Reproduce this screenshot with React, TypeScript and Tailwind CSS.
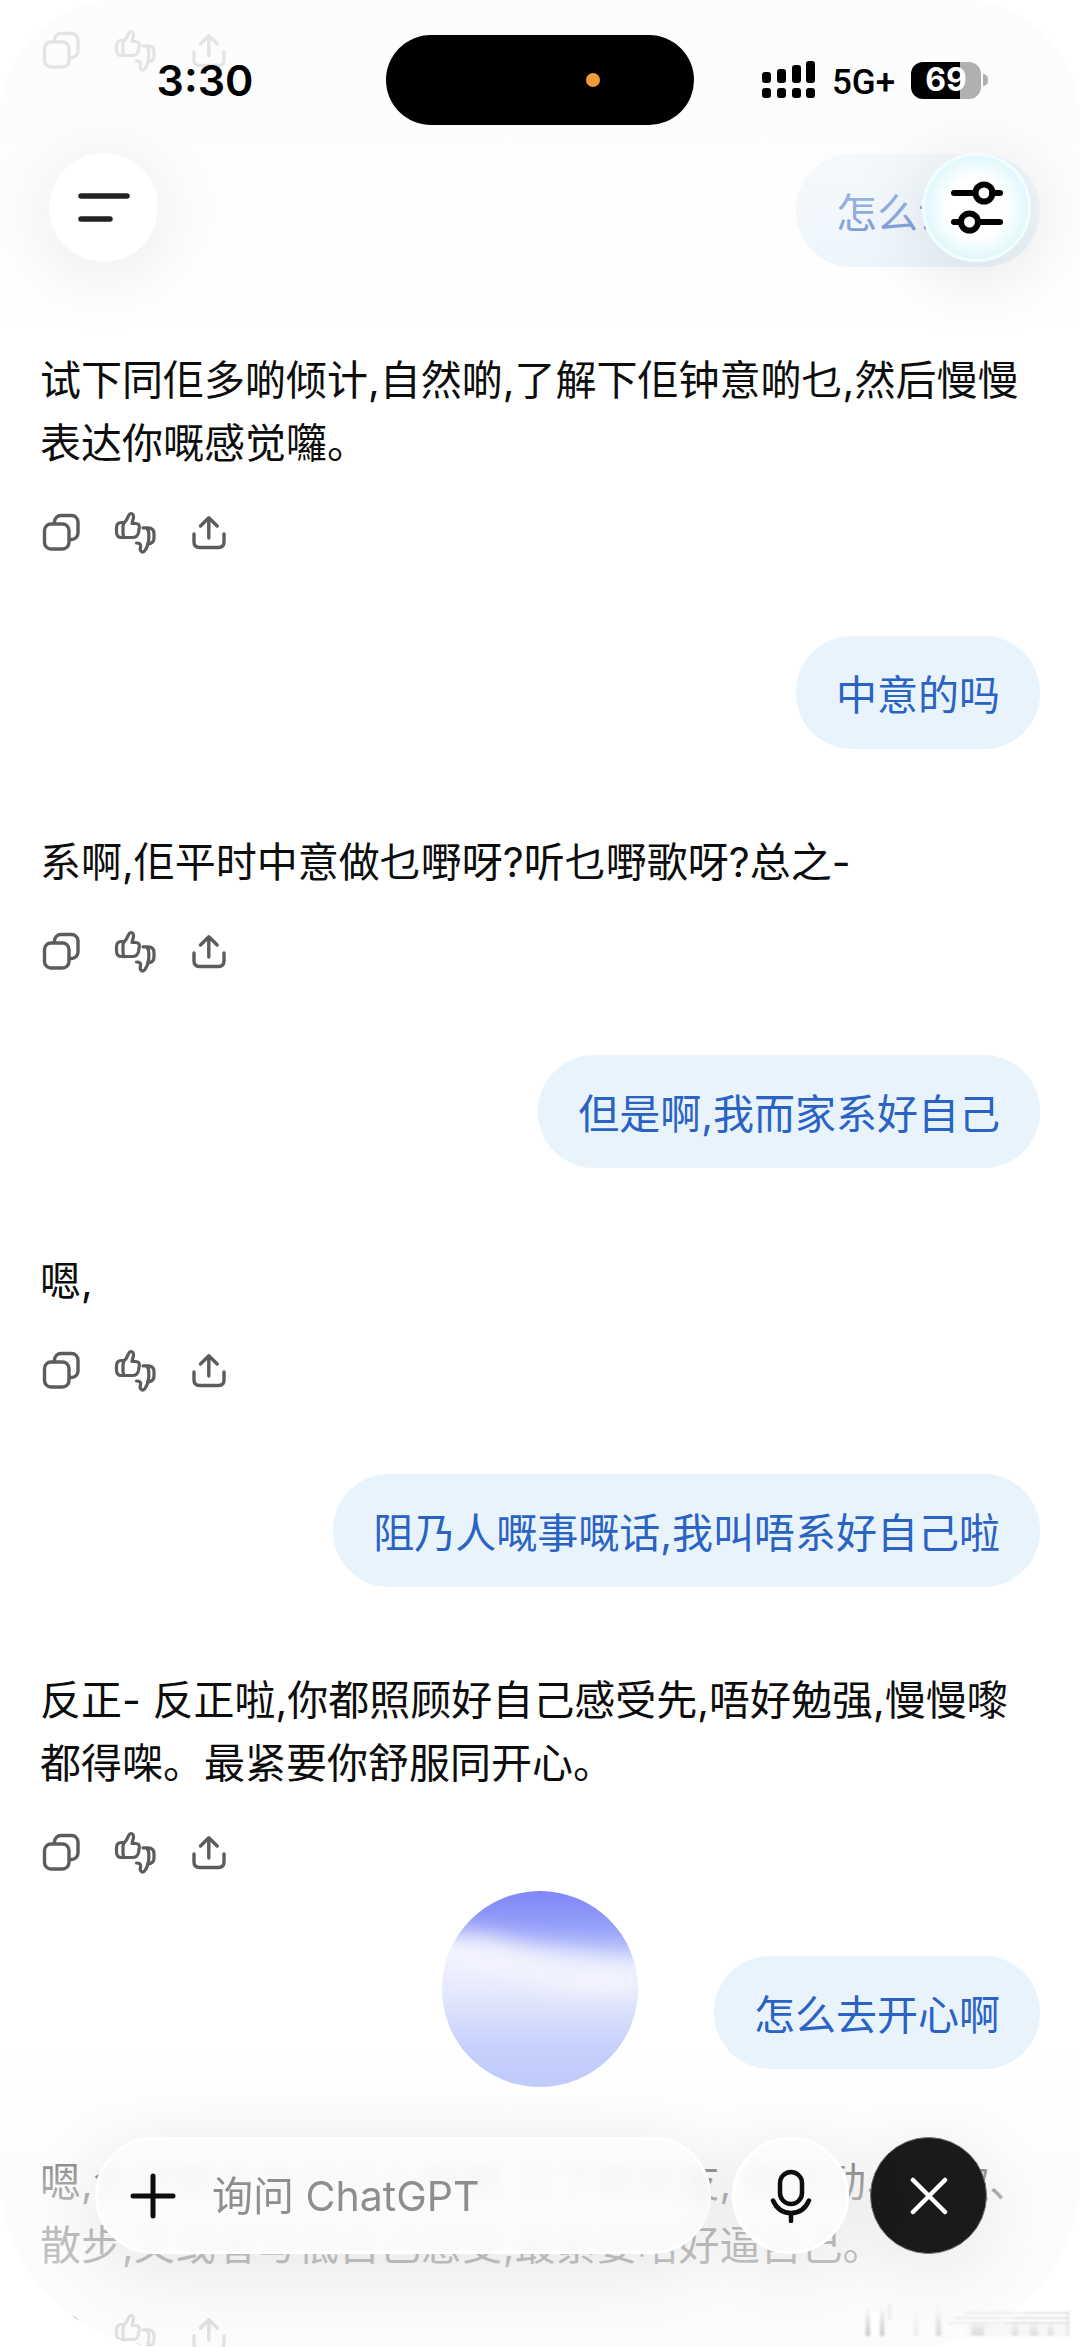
import type { ReactNode } from "react";

type Message = { from: "user" | "assistant"; text: string };

const messages: Message[] = [
  { from: "user", text: "怎么说啊" },
  {
    from: "assistant",
    text: "试下同佢多啲倾计,自然啲,了解下佢钟意啲乜,然后慢慢表达你嘅感觉囖。",
  },
  { from: "user", text: "中意的吗" },
  { from: "assistant", text: "系啊,佢平时中意做乜嘢呀?听乜嘢歌呀?总之-" },
  { from: "user", text: "但是啊,我而家系好自己" },
  { from: "assistant", text: "嗯," },
  { from: "user", text: "阻乃人嘅事嘅话,我叫唔系好自己啦" },
  {
    from: "assistant",
    text: "反正- 反正啦,你都照顾好自己感受先,唔好勉强,慢慢嚟都得㗎。最紧要你舒服同开心。",
  },
  { from: "user", text: "怎么去开心啊" },
  {
    from: "assistant",
    text: "嗯,会试啲令自己开心嘅嘢,见下啲朋友, 做运动、听歌、散步,又或者写低自己感受,最紧要唔好逼自己。",
  },
];

function CopyIcon() {
  return (
    <svg width="40" height="48" viewBox="0 0 40 48" fill="none" stroke="currentColor" strokeWidth="3.4">
      <rect x="4.5" y="16" width="24.5" height="25" rx="6.5" />
      <path d="M14.5 15.5V14A6.5 6.5 0 0 1 21 7.5H31.5A6.5 6.5 0 0 1 38 14v11a6.5 6.5 0 0 1-6.5 6.5H30" />
    </svg>
  );
}

function ThumbsIcon() {
  return (
    <svg
      width="44"
      height="48"
      viewBox="0 0 44 48"
      fill="none"
      stroke="currentColor"
      strokeWidth="3.2"
      strokeLinecap="round"
      strokeLinejoin="round"
    >
      <path d="M10.5 14.5H8.5Q3.5 14.5 3.5 20v4q0 5.5 5 5.5H19.5q5 0 6-5l.8-5q.4-4-3.5-4h-3.8l1.5-6Q20.7 5.5 18 5.5q-1.5 0-2.3 2L13 12.8q-3 2.4-3 5.7v7q0 2.5 1.5 4" />
      <path d="M30 19.8h5q6 0 6 6v4q0 5.7-5.5 6L32.3 42q-1.8 3-3.8 1.6-2-1.3-1-4.6 1-4-4-4M33.8 20q2 2 2 5.8v4.5q0 3.5-1.3 5.7" />
    </svg>
  );
}

function ShareIcon() {
  return (
    <svg
      width="38"
      height="48"
      viewBox="0 0 38 48"
      fill="none"
      stroke="currentColor"
      strokeWidth="3.4"
      strokeLinecap="round"
      strokeLinejoin="round"
    >
      <path d="M4 26v8q0 5.5 5.5 5.5h19q5.5 0 5.5-5.5v-8" />
      <path d="M18.8 30V10M10.5 18l8.3-8.2L27.2 18" />
    </svg>
  );
}

function Actions() {
  return (
    <div className="flex gap-[33px] text-[#5c5c5c]">
      <button type="button" aria-label="复制">
        <CopyIcon />
      </button>
      <button type="button" aria-label="评价">
        <ThumbsIcon />
      </button>
      <button type="button" aria-label="分享">
        <ShareIcon />
      </button>
    </div>
  );
}

function UserBubble({ children }: { children: ReactNode }) {
  return (
    <div className="mt-20 mb-[82px] flex justify-end">
      <p className="rounded-[56px] bg-[#e8f3fc] px-10 pt-7 pb-[22px] text-[#2a63c4]">{children}</p>
    </div>
  );
}

function AssistantMessage({ children }: { children: ReactNode }) {
  return (
    <div>
      <p className="mb-[33px] text-[#0d0d0d]">{children}</p>
      <Actions />
    </div>
  );
}

function StatusBar() {
  return (
    <div className="flex items-center pt-[35px] text-black">
      <div className="flex flex-1 justify-center pl-6">
        <time className="text-[43px] leading-none font-semibold">3:30</time>
      </div>
      <div className="flex h-[90px] w-[308px] items-center justify-end rounded-full bg-black pr-[94px]">
        <span className="size-[14px] rounded-full bg-[#f19a3e]" />
      </div>
      <div className="flex flex-1 items-center justify-center gap-4 pr-6">
        <svg width="54" height="38" viewBox="0 0 54 38" fill="currentColor">
          <rect x="0" y="11" width="9" height="11" rx="3" />
          <rect x="15" y="8" width="9" height="14" rx="3" />
          <rect x="30" y="4" width="9" height="18" rx="3" />
          <rect x="44" y="0" width="9" height="22" rx="3" />
          <rect x="0" y="27" width="9" height="10" rx="3" />
          <rect x="15" y="27" width="9" height="10" rx="3" />
          <rect x="30" y="27" width="9" height="10" rx="3" />
          <rect x="44" y="27" width="9" height="10" rx="3" />
        </svg>
        <span className="pt-1 font-[Roboto,sans-serif] text-[35px] leading-none font-medium">5G+</span>
        <div className="flex items-center gap-[2px]">
          <span className="flex h-[37px] w-[70px] items-center justify-center rounded-xl bg-linear-to-r from-black from-70% to-[#b0b0b0] to-70% text-[32px] leading-none font-bold text-white">
            69
          </span>
          <span className="h-3 w-[5px] rounded-r-full bg-[#b0b0b0]" />
        </div>
      </div>
    </div>
  );
}

function Header() {
  return (
    <header className="absolute inset-x-0 top-0 rounded-t-[120px] bg-linear-to-b from-[#fcfcfc]/85 from-20% via-[#fcfcfc]/50 via-62% to-[#fcfcfc]/0 pb-[70px]">
      <StatusBar />
      <div className="flex justify-between px-[49px] pt-7">
        <button
          type="button"
          aria-label="菜单"
          className="flex size-[109px] items-center justify-center rounded-full bg-white shadow-[0_12px_80px_rgba(0,0,0,0.09)]"
        >
          <svg width="52" height="36" viewBox="0 0 52 36" stroke="#222" strokeWidth="5.5" strokeLinecap="round">
            <path d="M3 6h46M3 29h29" />
          </svg>
        </button>
        <button
          type="button"
          aria-label="设置"
          className="flex size-[109px] items-center justify-center rounded-full border-3 border-[#f2fdff] bg-radial from-white from-40% to-[#c4f0fc] shadow-[0_12px_80px_rgba(0,0,0,0.12)]"
        >
          <svg width="52" height="54" viewBox="0 0 52 54" fill="none" stroke="#000" strokeWidth="6" strokeLinecap="round">
            <path d="M3 12h20M41 12h8M3 41h6M27 41h22" />
            <circle cx="33" cy="12" r="8.5" />
            <circle cx="18.5" cy="41" r="8.5" />
          </svg>
        </button>
      </div>
    </header>
  );
}

function VoiceOrb() {
  return (
    <svg width="196" height="196" viewBox="0 0 196 196">
      <defs>
        <linearGradient id="base" x1="0" y1="0" x2="0" y2="1">
          <stop offset="0.3" stopColor="#eef0fe" />
          <stop offset="0.5" stopColor="#e7eafd" />
          <stop offset="0.8" stopColor="#c6d0fb" />
          <stop offset="1" stopColor="#c0cbfb" />
        </linearGradient>
        <linearGradient id="sky" x1="0" y1="0" x2="0" y2="1">
          <stop offset="0.4" stopColor="#7c80f8" />
          <stop offset="0.75" stopColor="#949df8" />
          <stop offset="1" stopColor="#b9c8fa" />
        </linearGradient>
        <filter id="soft" x="-20%" y="-20%" width="140%" height="140%" colorInterpolationFilters="sRGB">
          <feGaussianBlur stdDeviation="10" />
        </filter>
        <clipPath id="disc">
          <circle cx="98" cy="98" r="98" />
        </clipPath>
      </defs>
      <g clipPath="url(#disc)">
        <rect width="196" height="196" fill="url(#base)" />
        <path d="M0 52Q40 46 80 62T196 70V100Q150 108 100 94T0 80Z" fill="#f3f3fe" filter="url(#soft)" />
        <path d="M-40-60H240V66Q180 66 130 58 90 54 60 46 30 38-40 42Z" fill="url(#sky)" filter="url(#soft)" />
      </g>
    </svg>
  );
}

function Composer() {
  return (
    <form className="flex w-full gap-[21px] pr-[93px] pl-[95px]">
      <div className="flex h-[117px] min-w-0 flex-1 items-center gap-9 rounded-full border-3 border-white bg-[#fcfcfc]/90 pr-10 pl-8 shadow-[0_12px_80px_rgba(0,0,0,0.09)] backdrop-blur-[6px]">
        <button type="button" aria-label="添加">
          <svg width="46" height="46" viewBox="0 0 46 46" stroke="#0d0d0d" strokeWidth="5" strokeLinecap="round">
            <path d="M23 3v40M3 23h40" />
          </svg>
        </button>
        <input
          type="text"
          aria-label="询问 ChatGPT"
          placeholder="询问 ChatGPT"
          className="h-16 w-full min-w-0 bg-transparent placeholder:text-[#8e8e8e] focus:outline-none"
        />
      </div>
      <button
        type="button"
        aria-label="语音输入"
        className="flex size-[117px] items-center justify-center rounded-full border-3 border-white bg-[#fcfcfc]/90 shadow-[0_12px_80px_rgba(0,0,0,0.09)] backdrop-blur-[6px]"
      >
        <svg
          width="42"
          height="54"
          viewBox="0 0 42 54"
          fill="none"
          stroke="#0d0d0d"
          strokeWidth="4.5"
          strokeLinecap="round"
        >
          <rect x="10" y="3" width="22" height="32" rx="11" />
          <path d="M3 31.5C6.5 39.5 13 44 21 44s14.5-4.5 18-12.5M21 44v8" />
        </svg>
      </button>
      <button
        type="button"
        aria-label="关闭"
        className="flex size-[117px] items-center justify-center rounded-full border border-[#777] bg-[#1a1a1a] shadow-[0_12px_80px_rgba(0,0,0,0.09)]"
      >
        <svg width="38" height="38" viewBox="0 0 38 38" stroke="#fff" strokeWidth="4.5" strokeLinecap="round">
          <path d="M3 3l32 32M35 3L3 35" />
        </svg>
      </button>
    </form>
  );
}

// faint smeared mark in the bottom corner
function Smudge() {
  return (
    <svg width="208" height="36" viewBox="0 0 208 36" className="absolute right-2 bottom-2">
      <defs>
        <linearGradient id="fade" x1="0" y1="0" x2="0" y2="1">
          <stop offset="0" stopColor="#999" stopOpacity="0" />
          <stop offset="1" stopColor="#999" />
        </linearGradient>
        <filter id="smear">
          <feGaussianBlur stdDeviation="1.8 1" />
        </filter>
      </defs>
      <rect x="6" y="8" width="11" height="25" fill="#fff" />
      <g filter="url(#smear)">
        <g fill="url(#fade)">
          <path d="M2 4h4v29H2zM16 4h4v29h-4z" opacity="0.6" />
          <path d="M50 4h4v29h-4z" opacity="0.2" />
          <path d="M72 4h5v29h-5z" opacity="0.4" />
          <path d="M108 18h12v15h-12zM148 18h6v15h-6zM166 18h8v15h-8zM184 18h5v15h-5z" opacity="0.3" />
        </g>
        <g fill="#999">
          <path d="M24 1h3v16h-3z" opacity="0.15" />
          <path d="M100 9h104v2H100zM90 14h114v2H90zM84 19h120v2H84z" opacity="0.16" />
          <path d="M160 9h44v2h-44zM150 14h54v2h-54zM140 19h64v2h-64z" opacity="0.16" />
          <path d="M104 22h100v11H104z" opacity="0.08" />
          <path d="M203 8h2v25h-2z" opacity="0.3" />
        </g>
      </g>
    </svg>
  );
}

export default function App() {
  return (
    <div className="relative h-screen w-full bg-white font-[Inter,'Noto_Sans_CJK_SC',sans-serif] text-[41px] leading-[63px]">
      <main className="relative h-full overflow-hidden rounded-b-[170px] bg-white">
        <div className="px-10 pt-[26px]">
          <Actions />
          {messages.map((message, index) =>
            message.from === "user" ? (
              <UserBubble key={index}>{message.text}</UserBubble>
            ) : (
              <AssistantMessage key={index}>{message.text}</AssistantMessage>
            ),
          )}
        </div>

        <Header />

        <div className="absolute inset-x-0 bottom-0 h-[300px] bg-linear-to-b from-[#fbfbfb]/0 via-[#fbfbfb]/70 via-50% to-[#fbfbfb]/85" />
        <footer className="absolute inset-x-0 bottom-0 flex flex-col items-center gap-[50px] pb-[93px]">
          <VoiceOrb />
          <Composer />
        </footer>
      </main>
      <Smudge />
    </div>
  );
}
